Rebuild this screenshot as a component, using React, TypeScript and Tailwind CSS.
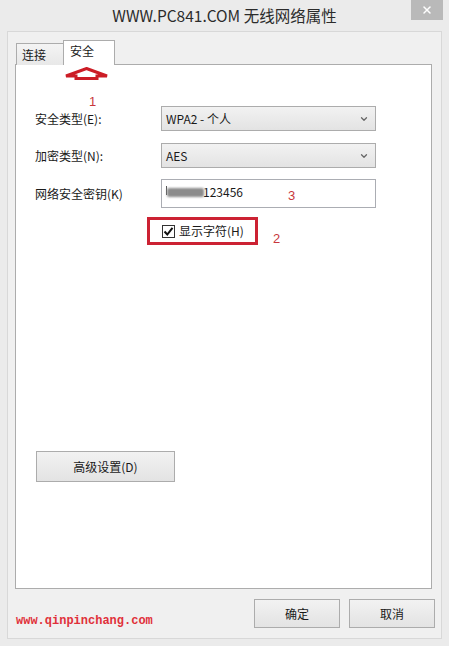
import { ChevronDown, X } from "lucide-react";

const ui = "font-['Noto_Sans_CJK_SC',sans-serif]";

const SelectBox = ({ value }: { value: string }) => (
  <div className="w-[215px] h-[25px] border border-[#acacac] bg-gradient-to-b from-[#f2f2f2] to-[#e3e3e3] flex items-center justify-between pl-[4px] pr-[6px] text-[12px] text-[#1a1a1a]">
    <span>{value}</span>
    <ChevronDown size={10} strokeWidth={3} className="text-[#666]" />
  </div>
);

const Row = ({ label, children }: { label: string; children: React.ReactNode }) => (
  <div className="flex items-center pl-[19px]">
    <div className="w-[126px] text-[12px] text-[#1a1a1a]">{label}</div>
    {children}
  </div>
);

const App = () => {
  return (
    <div className={`w-[449px] h-[646px] bg-[#ebebeb] flex flex-col ${ui}`}>
      {/* Title bar */}
      <div className="relative h-[31px] flex items-center justify-center text-[15.5px] text-[#2b2b2b]">
        WWW.PC841.COM 无线网络属性
        <div className="absolute top-0 right-[6px] w-[32px] h-[20px] bg-[#b9b9b9] flex items-center justify-center">
          <X size={12} strokeWidth={3} className="text-white" />
        </div>
      </div>

      {/* Client area */}
      <div className="ml-[7px] w-[435px] h-[608px] border border-[#d8d8d8] bg-[#f0f0f0] pl-[7px] pt-[8px] flex flex-col">
        {/* Tabs */}
        <div className="relative z-10 flex items-end h-[25px] ml-[1px] mb-[-1px] text-[12px] text-[#1a1a1a]">
          <div className="w-[48px] h-[22px] border border-b-0 border-[#acacac] bg-gradient-to-b from-[#f4f4f4] to-[#e8e8e8] pl-[5px] pt-[2px]">
            连接
          </div>
          <div className="w-[52px] h-[25px] ml-[-1px] border border-b-0 border-[#acacac] bg-white pl-[6px] pt-[1px]">
            安全
          </div>
        </div>

        {/* Tab panel */}
        <div className="w-[417px] h-[525px] border border-[#acacac] bg-white flex flex-col">
          {/* red arrow */}
          <svg width="47" height="13" viewBox="0 0 47 13" className="ml-[47px] mt-[2px]">
            <path d="M23.5 1.5 L44 9 L34 9 L34 11.5 L13 11.5 L13 9 L3 9 Z" fill="none" stroke="#cc1d26" strokeWidth="3" strokeLinejoin="miter" />
          </svg>

          <div className="relative mt-[26px]">
            <span className="absolute left-[73px] top-[-11px] text-[13px] leading-[13px] text-[#c8373c] font-['Liberation_Sans',sans-serif]">1</span>
            <Row label="安全类型(E):">
              <SelectBox value="WPA2 - 个人" />
            </Row>
          </div>

          <div className="mt-[12px]">
            <Row label="加密类型(N):">
              <SelectBox value="AES" />
            </Row>
          </div>

          <div className="mt-[11px]">
            <Row label="网络安全密钥(K)">
              <div className="relative w-[215px] h-[29px] border border-[#abadb3] bg-white flex items-start pt-[3px] pl-[4px] text-[12px] text-[#1a1a1a]">
                <span className="w-[1px] h-[9px] bg-[#555] mt-[3px]" />
                <span className="w-[37px] h-[9px] mt-[5px] bg-[#8c8c8c] rounded-[2px] blur-[1px]" />
                <span className="ml-[-1px]">123456</span>
                <span className="absolute left-[126px] top-[9px] text-[13px] leading-[13px] text-[#c8373c] font-['Liberation_Sans',sans-serif]">3</span>
              </div>
            </Row>
          </div>

          <div className="mt-[9px] ml-[131px] flex items-end">
            <div className="w-[111px] h-[28px] border-[3px] border-[#cc2233] flex items-center pl-[12px] gap-[4px] text-[12px] text-[#1a1a1a]">
              <div className="w-[13px] h-[13px] border border-[#333] bg-white flex items-center justify-center">
                <svg width="11" height="11" viewBox="0 0 11 11">
                  <path d="M1.5 5.5 L4.3 8.5 L9.5 1.8" fill="none" stroke="#111" strokeWidth="2" />
                </svg>
              </div>
              <span>显示字符(H)</span>
            </div>
            <span className="ml-[15px] mb-[-1px] text-[13px] leading-[14px] text-[#c8373c] font-['Liberation_Sans',sans-serif]">2</span>
          </div>

          <button className="mt-[206px] ml-[20px] w-[139px] h-[31px] border border-[#acacac] bg-gradient-to-b from-[#f2f2f2] to-[#e3e3e3] text-[12px] text-[#1a1a1a]">
            高级设置(D)
          </button>
        </div>

        {/* Bottom */}
        <div className="flex items-start justify-between pr-[6px] mt-[10px]">
          <div className="mt-[15px] ml-[1px] text-[12px] leading-[14px] font-bold text-[#e0303a] font-['Liberation_Mono',monospace]">
            www.qinpinchang.com
          </div>
          <div className="flex gap-[9px]">
            <button className="w-[86px] h-[29px] border border-[#acacac] bg-gradient-to-b from-[#f2f2f2] to-[#e3e3e3] text-[12px] text-[#1a1a1a]">
              确定
            </button>
            <button className="w-[86px] h-[29px] border border-[#acacac] bg-gradient-to-b from-[#f2f2f2] to-[#e3e3e3] text-[12px] text-[#1a1a1a]">
              取消
            </button>
          </div>
        </div>
      </div>
    </div>
  );
};

export default App;
